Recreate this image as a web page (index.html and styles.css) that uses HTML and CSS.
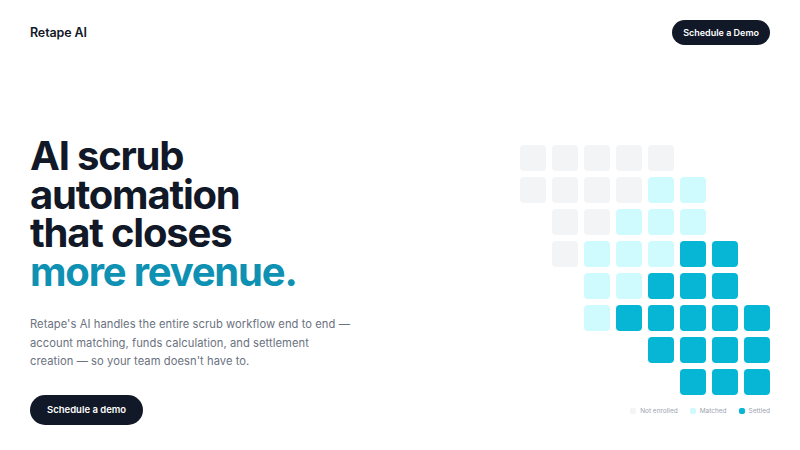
FILE: index.html
```html
<!DOCTYPE html>
<html>
<head>
<meta charset="utf-8">
<link rel="stylesheet" href="styles.css">
</head>
<body>
<header class="nav">
  <div class="brand">Retape AI</div>
  <a class="nav-btn">Schedule a Demo</a>
</header>
<main class="hero">
  <section class="copy">
    <h1 class="title">AI scrub<br>automation<br>that closes<br><span class="accent">more revenue.</span></h1>
    <p class="lead">Retape's AI handles the entire scrub workflow end to end —<br>account matching, funds calculation, and settlement<br>creation — so your team doesn't have to.</p>
    <a class="cta">Schedule a demo</a>
  </section>
  <section class="viz">
    <div class="grid">
      <div class="c g"></div><div class="c g"></div><div class="c g"></div><div class="c g"></div><div class="c g"></div><div class="c"></div><div class="c"></div><div class="c"></div>
      <div class="c g"></div><div class="c g"></div><div class="c g"></div><div class="c g"></div><div class="c l"></div><div class="c l"></div><div class="c"></div><div class="c"></div>
      <div class="c"></div><div class="c g"></div><div class="c g"></div><div class="c l"></div><div class="c l"></div><div class="c l"></div><div class="c"></div><div class="c"></div>
      <div class="c"></div><div class="c g"></div><div class="c l"></div><div class="c l"></div><div class="c l"></div><div class="c d"></div><div class="c d"></div><div class="c"></div>
      <div class="c"></div><div class="c"></div><div class="c l"></div><div class="c l"></div><div class="c d"></div><div class="c d"></div><div class="c d"></div><div class="c"></div>
      <div class="c"></div><div class="c"></div><div class="c l"></div><div class="c d"></div><div class="c d"></div><div class="c d"></div><div class="c d"></div><div class="c d"></div>
      <div class="c"></div><div class="c"></div><div class="c"></div><div class="c"></div><div class="c d"></div><div class="c d"></div><div class="c d"></div><div class="c d"></div>
      <div class="c"></div><div class="c"></div><div class="c"></div><div class="c"></div><div class="c"></div><div class="c d"></div><div class="c d"></div><div class="c d"></div>
    </div>
    <div class="legend">
      <span class="item"><i class="dot g"></i>Not enrolled</span>
      <span class="item"><i class="dot l"></i>Matched</span>
      <span class="item"><i class="dot d"></i>Settled</span>
    </div>
  </section>
</main>
</body>
</html>
```
FILE: styles.css
```css
* { box-sizing: border-box; }
html, body { margin: 0; padding: 0; background: #fff; }
body { font-family: Inter, "Noto Sans", sans-serif; color: #111827; width: 800px; height: 450px; overflow: hidden; }

.nav { display: flex; justify-content: space-between; align-items: center; padding: 20px 30px 0 30px; height: 45px; }
.brand { font-size: 12.5px; font-weight: 600; letter-spacing: -0.01em; color: #111827; }
.nav-btn { display: inline-flex; align-items: center; height: 25px; padding: 0 11px; border-radius: 13px; background: #111827; color: #fff; font-size: 9px; font-weight: 600; }

.hero { display: flex; justify-content: space-between; padding: 92px 30px 0 30px; }
.copy { width: 380px; }
.title { margin: 0; font-size: 40px; line-height: 38.5px; font-weight: 700; letter-spacing: -0.03em; color: #111827; }
.accent { color: #0e91b2; }
.lead { margin: 24px 0 0 0; font-size: 11.2px; line-height: 18.5px; letter-spacing: 0.005em; color: #6b7280; width: 360px; }
.cta { display: inline-flex; align-items: center; height: 30px; padding: 0 17px; margin-top: 24px; border-radius: 15px; background: #111827; color: #fff; font-size: 9.5px; font-weight: 600; }

.viz { display: flex; flex-direction: column; align-items: flex-end; padding-top: 8px; }
.grid { display: grid; grid-template-columns: repeat(8, 26px); grid-auto-rows: 26px; gap: 6px; }
.c { border-radius: 4px; }
.g { background: #f3f4f6; }
.l { background: #cffafe; }
.d { background: #06b6d4; }
.legend { display: flex; gap: 12px; margin-top: 12px; font-size: 6.5px; color: #9ca3af; }
.item { display: inline-flex; align-items: center; gap: 4px; }
.dot { width: 6px; height: 6px; border-radius: 2px; display: inline-block; }
```
